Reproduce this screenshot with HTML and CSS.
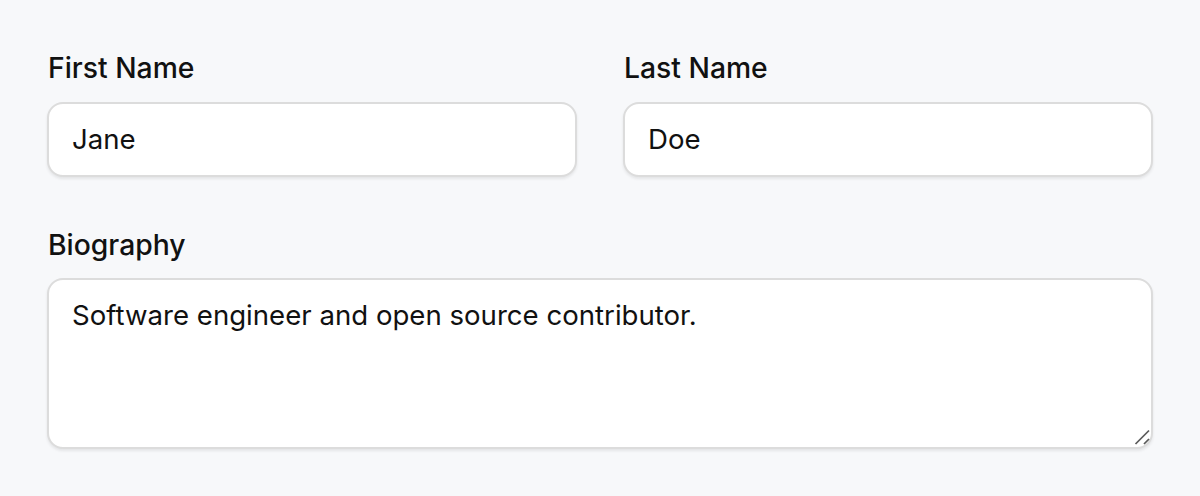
FILE: index.html
```html
<!DOCTYPE html>
<html>
<head>
<meta charset="utf-8">
<link rel="stylesheet" href="styles.css">
</head>
<body>
<form class="form">
  <div class="row">
    <div class="field">
      <label class="label">First Name</label>
      <input class="input" type="text" value="Jane">
    </div>
    <div class="field">
      <label class="label">Last Name</label>
      <input class="input" type="text" value="Doe">
    </div>
  </div>
  <div class="field field-bio">
    <label class="label">Biography</label>
    <div class="textarea-wrap">
      <textarea class="input textarea">Software engineer and open source contributor.</textarea>
      <svg class="grip" width="16" height="16" viewBox="0 0 16 16" aria-hidden="true">
        <line x1="1.5" y1="15" x2="15" y2="1.5" stroke="#5a5a5a" stroke-width="1.7"/>
        <line x1="10" y1="15" x2="15" y2="10" stroke="#5a5a5a" stroke-width="1.7"/>
      </svg>
    </div>
  </div>
</form>
</body>
</html>
```
FILE: styles.css
```css
html, body {
  margin: 0;
  padding: 0;
  background: #f7f8fa;
}
body {
  font-family: Inter, "Liberation Sans", sans-serif;
  color: #111;
}
.form {
  padding: 50px 47px;
  display: flex;
  flex-direction: column;
  gap: 50px;
}
.row {
  display: grid;
  grid-template-columns: 1fr 1fr;
  gap: 46px;
}
.field {
  display: flex;
  flex-direction: column;
  gap: 16px;
}
.field-bio {
  gap: 15px;
}
.label {
  font-size: 28.3px;
  font-weight: 500;
  line-height: 36px;
  padding-left: 1px;
  color: #111;
}
.input {
  font-family: inherit;
  font-size: 27.6px;
  line-height: 39px;
  color: #111;
  background: #fff;
  border: 2px solid #dcdcdc;
  border-radius: 16px;
  padding: 16px 23px;
  box-shadow: 0 2px 3px rgba(0,0,0,0.08);
  outline: none;
  box-sizing: border-box;
  width: 100%;
  margin: 0;
}
.textarea-wrap {
  position: relative;
}
.textarea {
  height: 171px;
  resize: vertical;
  display: block;
}
.textarea::-webkit-resizer {
  background: transparent;
}
.grip {
  position: absolute;
  right: 3px;
  bottom: 4px;
  pointer-events: none;
}
```
